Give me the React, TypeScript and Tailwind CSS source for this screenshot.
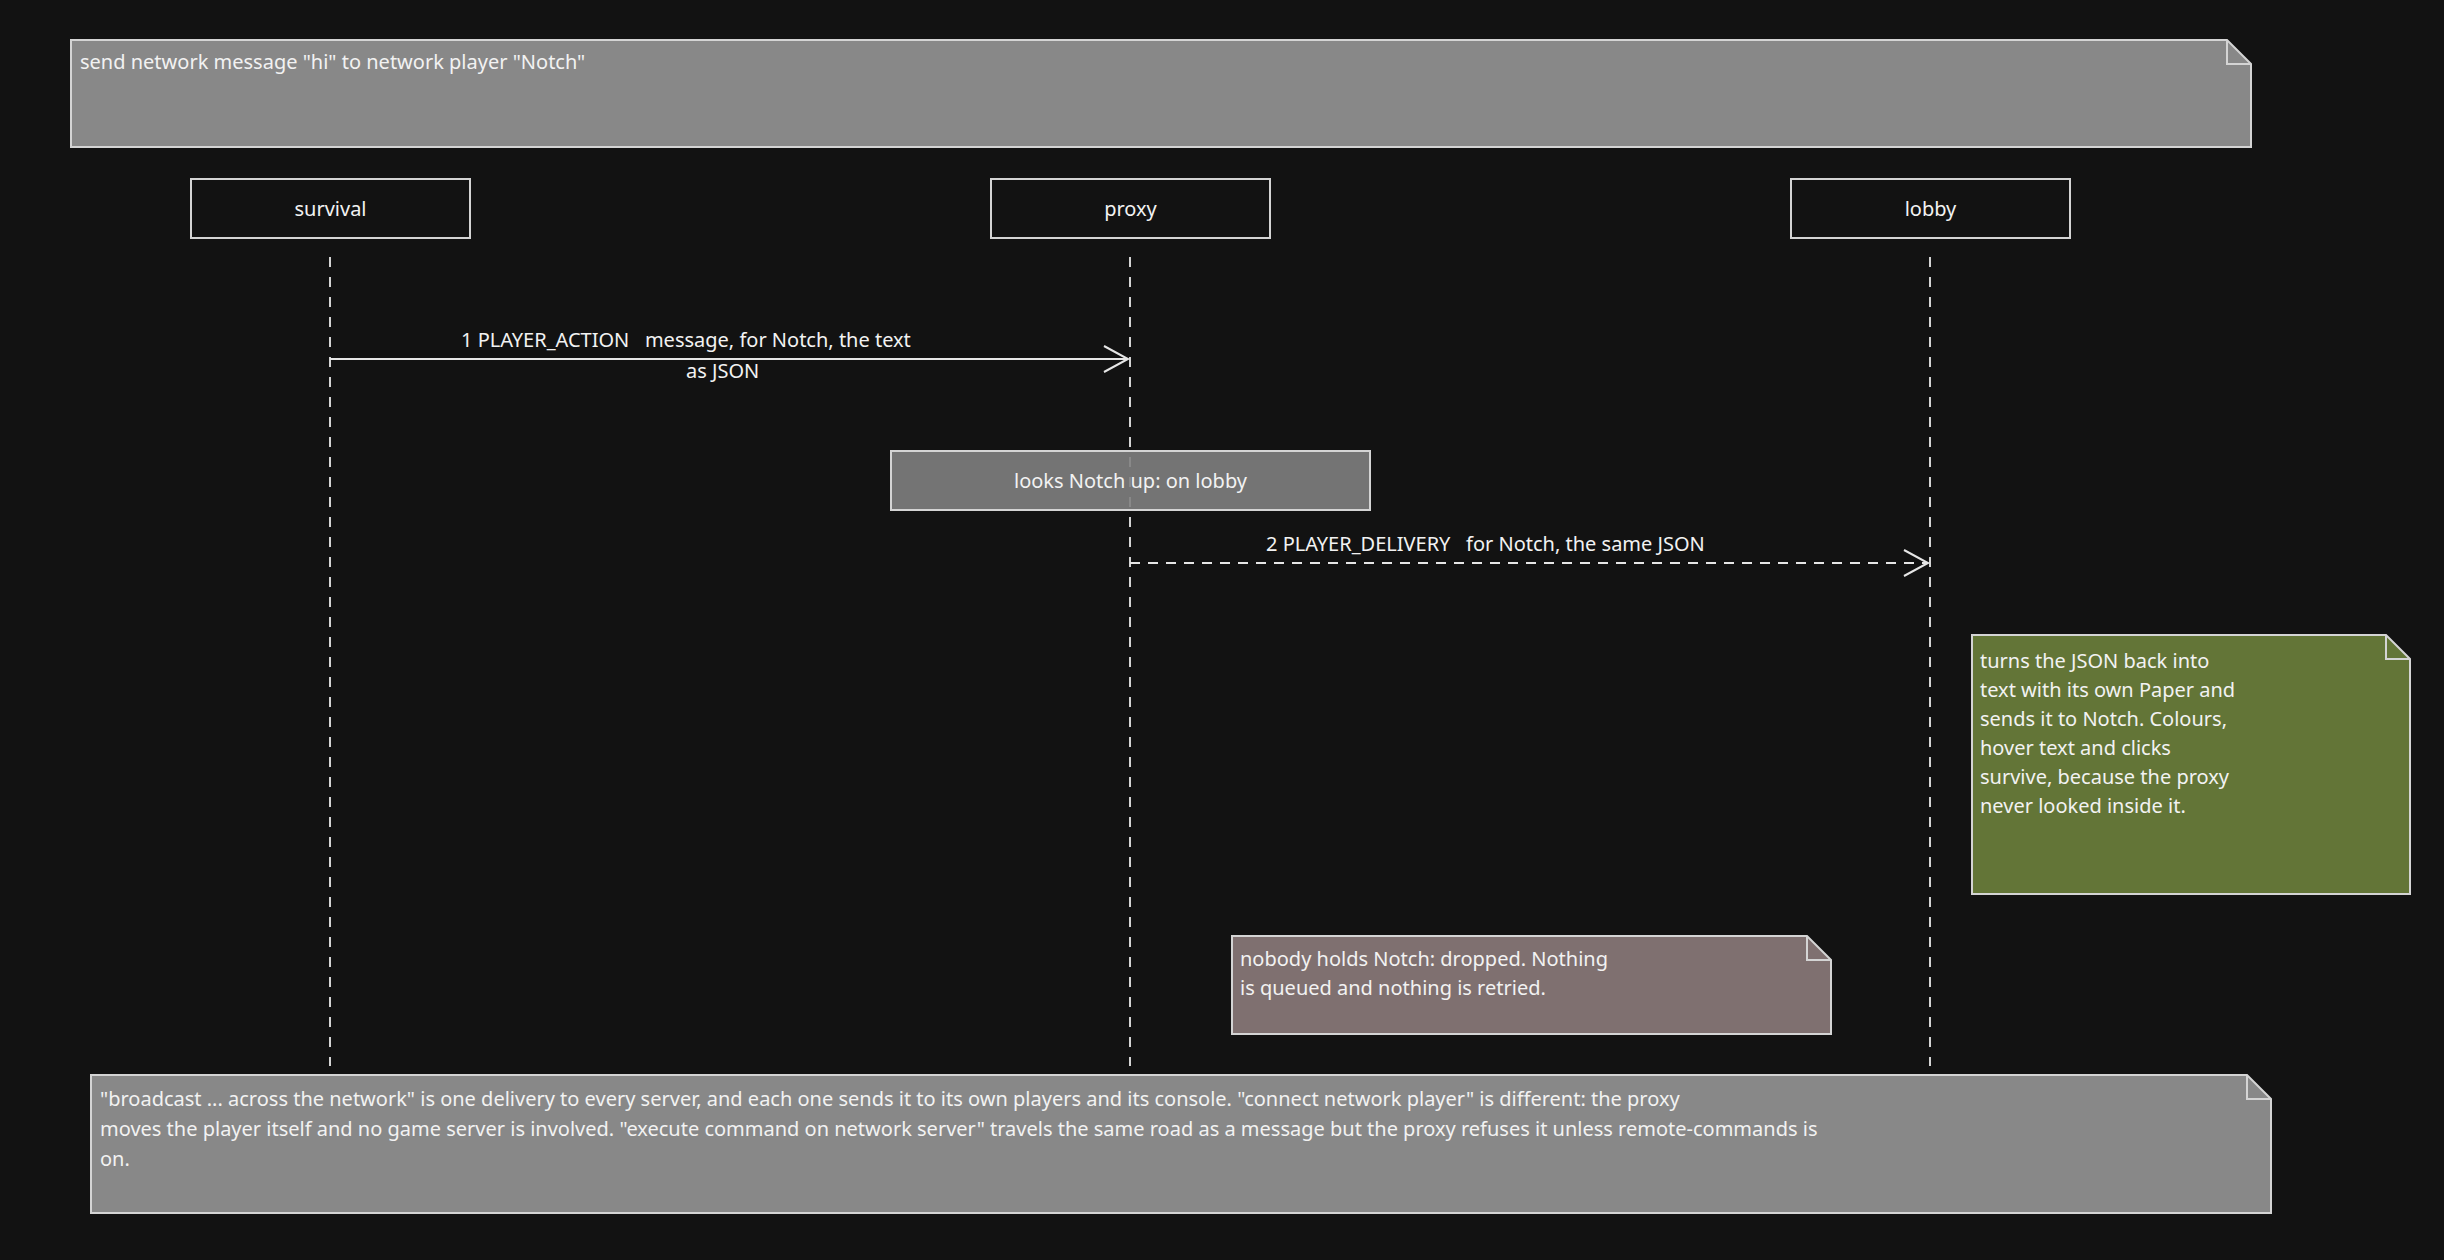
import React from 'react';

type NoteProps = {
    x: number; y: number; w: number; h: number;
    fill: string;
    children: React.ReactNode;
    className?: string;
};

// Note shape with a folded top-right corner
function Note({ x, y, w, h, fill, children, className }: NoteProps) {
    const f = 25;
    return (
        <div className="absolute" style={{ left: x, top: y, width: w, height: h }}>
            <svg className="absolute inset-0" width={w} height={h}>
                <path
                    d={`M1 1 H${w - f} L${w - 1} ${f} V${h - 1} H1 Z`}
                    fill={fill}
                    stroke="#d4d4d4"
                    strokeWidth="2"
                />
                <path d={`M${w - f} 1 V${f} H${w - 1}`} fill="none" stroke="#d4d4d4" strokeWidth="2" />
            </svg>
            <div className={'relative text-[20px] leading-[29px] text-[#f2f2f2] ' + (className ?? '')}>{children}</div>
        </div>
    );
}

function Participant({ x, label }: { x: number; label: string }) {
    return (
        <div
            className="absolute flex items-center justify-center border-2 border-[#d4d4d4] text-[20px] text-[#f2f2f2]"
            style={{ left: x, top: 178, width: 281, height: 61 }}
        >
            {label}
        </div>
    );
}

export default function App() {
    return (
        <div
            className="relative h-[1260px] w-[2444px] overflow-hidden bg-[#121212]"
            style={{ fontFamily: '"Noto Sans", "Open Sans", sans-serif' }}
        >
            {/* lifelines and messages */}
            <svg className="absolute inset-0" width="2444" height="1260">
                <g stroke="#d4d4d4" strokeWidth="2" strokeDasharray="10 10" fill="none">
                    <line x1="330" y1="257" x2="330" y2="1066" />
                    <line x1="1130" y1="257" x2="1130" y2="1066" />
                    <line x1="1930" y1="257" x2="1930" y2="1066" />
                </g>
                <g stroke="#e6e6e6" strokeWidth="2" fill="none">
                    <line x1="330" y1="359" x2="1128" y2="359" />
                    <path d="M1104 346 L1128 359 L1104 372" />
                    <line x1="1130" y1="563" x2="1928" y2="563" strokeDasharray="10 8" />
                    <path d="M1904 550 L1928 563 L1904 576" />
                </g>
            </svg>

            <Note x={70} y={39} w={2182} h={109} fill="#888888" className="px-[10px] pt-[8px]">
                send network message "hi" to network player "Notch"
            </Note>

            <Participant x={190} label="survival" />
            <Participant x={990} label="proxy" />
            <Participant x={1790} label="lobby" />

            <div className="absolute text-[20px] leading-[30px] text-[#f2f2f2]" style={{ left: 461, top: 325 }}>
                1 PLAYER_ACTION&nbsp;&nbsp;&nbsp;message, for Notch, the text
            </div>
            <div className="absolute text-[20px] leading-[30px] text-[#f2f2f2]" style={{ left: 686, top: 356 }}>
                as JSON
            </div>

            <div
                className="absolute flex items-center justify-center border-2 border-[#d4d4d4] bg-[#808080]/90 text-[20px] text-[#f2f2f2]"
                style={{ left: 890, top: 450, width: 481, height: 61 }}
            >
                looks Notch up: on lobby
            </div>

            <div className="absolute text-[20px] leading-[30px] text-[#f2f2f2]" style={{ left: 1266, top: 529 }}>
                2 PLAYER_DELIVERY&nbsp;&nbsp;&nbsp;for Notch, the same JSON
            </div>

            <Note x={1971} y={634} w={440} h={261} fill="#637537" className="px-[9px] pt-[12px]">
                turns the JSON back into<br />
                text with its own Paper and<br />
                sends it to Notch. Colours,<br />
                hover text and clicks<br />
                survive, because the proxy<br />
                never looked inside it.
            </Note>

            <Note x={1231} y={935} w={601} h={100} fill="#7f7070" className="px-[9px] pt-[9px]">
                nobody holds Notch: dropped. Nothing<br />
                is queued and nothing is retried.
            </Note>

            <Note x={90} y={1074} w={2182} h={140} fill="#888888" className="px-[10px] pt-[10px] leading-[30px]">
                "broadcast ... across the network" is one delivery to every server, and each one sends it to its own players and its console. "connect network player" is different: the proxy<br />
                moves the player itself and no game server is involved. "execute command on network server" travels the same road as a message but the proxy refuses it unless remote-commands is<br />
                on.
            </Note>
        </div>
    );
}
